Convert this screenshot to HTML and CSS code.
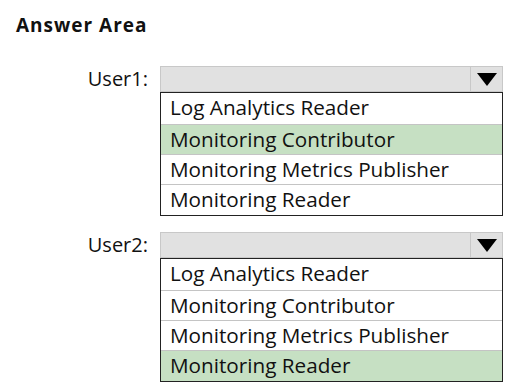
FILE: index.html
```html
<!DOCTYPE html>
<html lang="en">
<head>
  <meta charset="UTF-8" />
  <title>Answer Area</title>
  <link rel="stylesheet" href="styles.css">
</head>
<body>
<div class="answer-area">
  <h2>Answer Area</h2>

  <div class="field">
    <label>User1:</label>
    <div class="dropdown">
      <div class="dropdown-bar">
        <span class="dropdown-btn"><span class="arrow"></span></span>
      </div>
      <ul class="options">
        <li>Log Analytics Reader</li>
        <li class="selected">Monitoring Contributor</li>
        <li>Monitoring Metrics Publisher</li>
        <li>Monitoring Reader</li>
      </ul>
    </div>
  </div>

  <div class="field">
    <label>User2:</label>
    <div class="dropdown">
      <div class="dropdown-bar">
        <span class="dropdown-btn"><span class="arrow"></span></span>
      </div>
      <ul class="options">
        <li>Log Analytics Reader</li>
        <li>Monitoring Contributor</li>
        <li>Monitoring Metrics Publisher</li>
        <li class="selected">Monitoring Reader</li>
      </ul>
    </div>
  </div>
</div>
</body>
</html>
```

FILE: styles.css
```css
body {
  font-family: "Open Sans", "Noto Sans", Arial, sans-serif;
  margin: 0;
  padding: 13px 0 0 16px;
  background-color: #fff;
  color: #111;
}
h2 {
  margin: 0 0 29px;
  font-size: 19px;
  line-height: 24px;
  letter-spacing: 1px;
  font-weight: bold;
}
.field {
  display: flex;
  align-items: flex-start;
  margin-bottom: 16px;
}
.field label {
  width: 132px;
  margin-right: 12px;
  text-align: right;
  font-size: 20px;
  line-height: 26px;
}
.dropdown {
  width: 343px;
  flex-shrink: 0;
}
.dropdown-bar {
  height: 24px;
  background-color: #e1e1e1;
  border: 1px solid #c8c8c8;
  display: flex;
  justify-content: flex-end;
}
.dropdown-btn {
  width: 31px;
  border-left: 1px solid #c8c8c8;
  display: flex;
  align-items: center;
  justify-content: center;
}
.arrow {
  width: 0;
  height: 0;
  border-left: 10px solid transparent;
  border-right: 10px solid transparent;
  border-top: 13px solid #000;
}
.options {
  list-style: none;
  margin: 0;
  padding: 0;
  border: 1px solid #222;
  background: #fff;
}
.options li {
  height: 29px;
  line-height: 29px;
  padding-left: 9px;
  font-size: 20.7px;
  border-top: 1px solid #c4c4c4;
}
.options li:first-child {
  border-top: none;
  height: 31px;
}
.options li:last-child {
  height: 30px;
}
.options li.selected {
  background-color: #c6e0c3;
}
```
